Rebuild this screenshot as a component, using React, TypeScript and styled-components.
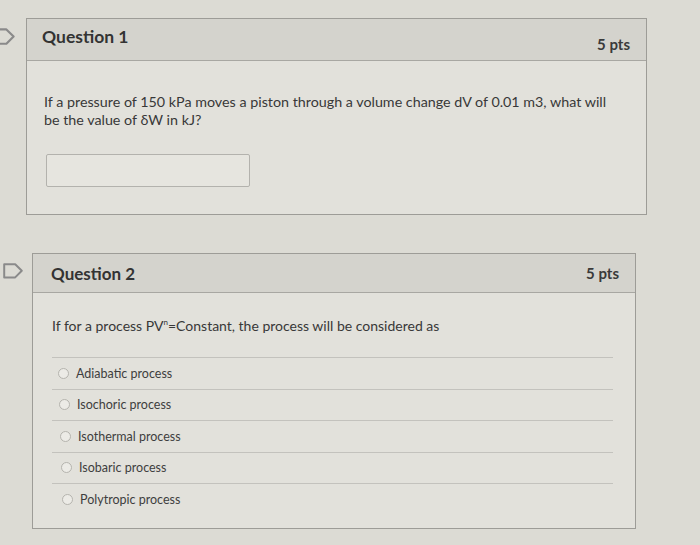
import React from 'react';
import styled, { createGlobalStyle } from 'styled-components';

const GlobalStyle = createGlobalStyle`
  html, body {
    margin: 0;
    padding: 0;
    background: #dcdbd4;
    font-family: Lato, 'Open Sans', sans-serif;
    color: #3b3b3b;
  }
`;

const Page = styled.div`
  width: 700px;
  height: 545px;
  overflow: hidden;
  padding-top: 18px;
  box-sizing: border-box;
  display: flex;
  flex-direction: column;
  gap: 38px;
`;

const QuestionRow = styled.div`
  display: flex;
  align-items: flex-start;
`;

const Gutter = styled.div<{ $width: number; $padTop: number; $iconLeft: number }>`
  width: ${(p) => p.$width}px;
  flex-shrink: 0;
  display: flex;
  padding-top: ${(p) => p.$padTop}px;
  padding-left: ${(p) => Math.max(p.$iconLeft, 0)}px;
  box-sizing: border-box;
  overflow: visible;

  svg {
    margin-left: ${(p) => Math.min(p.$iconLeft, 0)}px;
    flex-shrink: 0;
  }
`;

const Card = styled.div<{ $width: number }>`
  width: ${(p) => p.$width}px;
  border: 1px solid #9d9c97;
  background: #e2e1db;
  box-sizing: border-box;
`;

const Header = styled.div<{ $height: number; $padLeft: number }>`
  height: ${(p) => p.$height}px;
  background: #d4d3cd;
  border-bottom: 1px solid #a8a7a2;
  display: flex;
  justify-content: space-between;
  align-items: center;
  padding: 0 16px 0 ${(p) => p.$padLeft}px;
  box-sizing: border-box;
`;

const Title = styled.h2<{ $size: number; $lift?: number }>`
  margin: 0 0 ${(p) => (p.$lift ?? 0) * 2}px 0;
  font-size: ${(p) => p.$size}px;
  font-weight: 700;
  color: #333;
`;

const Points = styled.span<{ $drop?: number }>`
  margin-top: ${(p) => (p.$drop ?? 0) * 2}px;
  font-size: 15px;
  font-weight: 700;
  color: #3a3a3a;
`;

const Body = styled.div<{ $pad: string }>`
  padding: ${(p) => p.$pad};
`;

const Prompt = styled.p<{ $size: number }>`
  margin: 0;
  font-size: ${(p) => p.$size}px;
  line-height: 18px;
  color: #383838;
`;

const Sup = styled.sup`
  font-size: 8px;
  line-height: 0;
`;

const AnswerBox = styled.div`
  width: 204px;
  height: 33px;
  margin-top: 25px;
  margin-left: 2px;
  border: 1px solid #b3b2ad;
  border-radius: 2px;
  background: #e6e5df;
  box-sizing: border-box;
`;

const Options = styled.div`
  margin-top: 22px;
  margin-right: 22px;
  display: flex;
  flex-direction: column;
`;

const Option = styled.label<{ $indent: number }>`
  display: flex;
  align-items: center;
  gap: 7px;
  height: 31.5px;
  padding-left: ${(p) => p.$indent}px;
  border-top: 1px solid #c3c2bd;
  font-size: 12.5px;
  color: #3e3e3e;
  box-sizing: border-box;
`;

const Radio = styled.span`
  width: 9px;
  height: 9px;
  border-radius: 50%;
  border: 1px solid #b5b4ae;
  background: #ecebe6;
  flex-shrink: 0;
`;

const FlagIcon = ({ size }: { size: number }) => (
  <svg width={size} height={size * 0.8} viewBox="0 0 20 16">
    <path
      d="M2 2 H12 L18 8 L12 14 H2 Z"
      fill="none"
      stroke="#8a8a8a"
      strokeWidth="1.8"
      strokeLinejoin="round"
    />
  </svg>
);

const options = [
  'Adiabatic process',
  'Isochoric process',
  'Isothermal process',
  'Isobaric process',
  'Polytropic process',
];

export default function App() {
  return (
    <>
      <GlobalStyle />
      <Page>
        <QuestionRow>
          <Gutter $width={26} $padTop={9} $iconLeft={-8}>
            <FlagIcon size={24} />
          </Gutter>
          <Card $width={621}>
            <Header $height={42} $padLeft={15}>
              <Title $size={17.5} $lift={3}>Question 1</Title>
              <Points $drop={4}>5 pts</Points>
            </Header>
            <Body $pad="32px 30px 27px 17px">
              <Prompt $size={14.3}>
                If a pressure of 150 kPa moves a piston through a volume change dV of 0.01 m3, what will
                be the value of δW in kJ?
              </Prompt>
              <AnswerBox />
            </Body>
          </Card>
        </QuestionRow>

        <QuestionRow>
          <Gutter $width={32} $padTop={9} $iconLeft={2}>
            <FlagIcon size={22} />
          </Gutter>
          <Card $width={604}>
            <Header $height={39} $padLeft={18}>
              <Title $size={17}>Question 2</Title>
              <Points>5 pts</Points>
            </Header>
            <Body $pad="24px 0 13px 19px">
              <Prompt $size={14}>
                If for a process PV<Sup>n</Sup>=Constant, the process will be considered as
              </Prompt>
              <Options>
                {options.map((o, i) => (
                  <Option key={o} $indent={6 + i}>
                    <Radio />
                    {o}
                  </Option>
                ))}
              </Options>
            </Body>
          </Card>
        </QuestionRow>
      </Page>
    </>
  );
}
